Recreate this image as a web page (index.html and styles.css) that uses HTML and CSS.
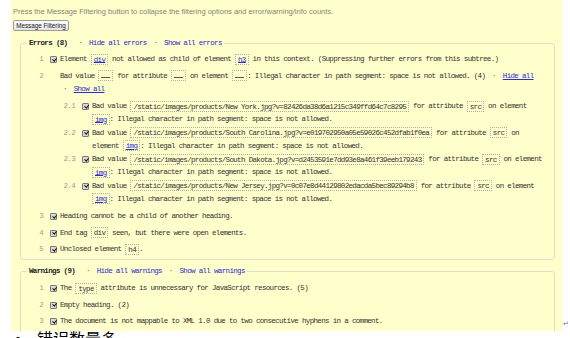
FILE: index.html
```html
<!DOCTYPE html>
<html lang="en">

<head>
    <meta charset="UTF-8">
    <title>Validation Messages</title>
    <link rel="stylesheet" href="styles.css">
</head>

<body>
    <div class="page">
        <div class="shot">
            <p class="intro">Press the Message Filtering button to collapse the filtering options and error/warning/info counts.</p>
            <button class="filter-btn">Message Filtering</button>

            <fieldset class="group">
                <legend><strong class="title">Errors (8)</strong> <span class="sep">·</span> <a href="#">Hide all errors</a> <span class="sep">·</span> <a href="#">Show all errors</a></legend>
                <ol class="msgs">
                    <li>
                        <span class="num">1</span><span class="check"></span>
                        <div class="text">Element <code class="el"><a href="#">div</a></code> not allowed as child of element <code class="el"><a href="#">h3</a></code> in this context. (Suppressing further errors from this subtree.)</div>
                    </li>
                    <li>
                        <span class="num">2</span><span class="check empty"></span>
                        <div class="text">
                            Bad value <code class="blank"><i></i></code> for attribute <code class="blank"><i></i></code> on element <code class="blank"><i></i></code>: Illegal character in path segment: space is not allowed. (4) <span class="sep">·</span> <a class="ul" href="#">Hide all</a><br>
                            <span class="sep">·</span> <a class="ul" href="#">Show all</a>
                            <ol class="sub">
                                <li>
                                    <span class="num">2.1</span><span class="check"></span>
                                    <div class="text">Bad value <code>/static/images/products/New York.jpg?v=82426da38d6a1215c349ffd64c7c8295</code> for attribute <code>src</code> on element<br><code class="el"><a href="#">img</a></code>: Illegal character in path segment: space is not allowed.</div>
                                </li>
                                <li>
                                    <span class="num">2.2</span><span class="check"></span>
                                    <div class="text">Bad value <code>/static/images/products/South Carolina.jpg?v=e019702950a05e59026c452dfab1f0ea</code> for attribute <code>src</code> on<br>element <code class="el"><a href="#">img</a></code>: Illegal character in path segment: space is not allowed.</div>
                                </li>
                                <li>
                                    <span class="num">2.3</span><span class="check"></span>
                                    <div class="text">Bad value <code>/static/images/products/South Dakota.jpg?v=d2453591e7dd93e8a461f39eeb179243</code> for attribute <code>src</code> on element<br><code class="el"><a href="#">img</a></code>: Illegal character in path segment: space is not allowed.</div>
                                </li>
                                <li>
                                    <span class="num">2.4</span><span class="check"></span>
                                    <div class="text">Bad value <code>/static/images/products/New Jersey.jpg?v=0c07e8d44129802edacda5bec89294b8</code> for attribute <code>src</code> on element<br><code class="el"><a href="#">img</a></code>: Illegal character in path segment: space is not allowed.</div>
                                </li>
                            </ol>
                        </div>
                    </li>
                    <li>
                        <span class="num">3</span><span class="check"></span>
                        <div class="text">Heading cannot be a child of another heading.</div>
                    </li>
                    <li>
                        <span class="num">4</span><span class="check"></span>
                        <div class="text">End tag <code>div</code> seen, but there were open elements.</div>
                    </li>
                    <li>
                        <span class="num">5</span><span class="check"></span>
                        <div class="text">Unclosed element <code>h4</code>.</div>
                    </li>
                </ol>
            </fieldset>

            <fieldset class="group warnings">
                <legend><strong class="title">Warnings (9)</strong> <span class="sep">·</span> <a href="#">Hide all warnings</a> <span class="sep">·</span> <a href="#">Show all warnings</a></legend>
                <ol class="msgs">
                    <li>
                        <span class="num">1</span><span class="check"></span>
                        <div class="text">The <code>type</code> attribute is unnecessary for JavaScript resources. (5)</div>
                    </li>
                    <li>
                        <span class="num">2</span><span class="check"></span>
                        <div class="text">Empty heading. (2)</div>
                    </li>
                    <li>
                        <span class="num">3</span><span class="check"></span>
                        <div class="text">The document is not mappable to XML 1.0 due to two consecutive hyphens in a comment.</div>
                    </li>
                </ol>
            </fieldset>
        </div>
        <span class="para-mark">↵</span>
    </div>

    <p class="bullet"><span class="dot">•</span>错误数量多</p>
</body>

</html>
```

FILE: styles.css
```css
* {
    box-sizing: border-box;
    margin: 0;
    padding: 0;
}

body {
    background: #fff;
    font-family: 'Liberation Mono', monospace;
    color: #333;
}

.page {
    display: flex;
    align-items: flex-end;
}

.shot {
    margin-left: 11px;
    width: 551px;
    height: 331px;
    overflow: hidden;
    background: #ffffcc;
    padding: 4.5px 7px 0 2px;
}

.intro {
    font-family: 'Liberation Sans', Arial, sans-serif;
    font-size: 7.5px;
    line-height: 13px;
    color: #85857a;
}

.filter-btn {
    display: block;
    margin-top: 2.5px;
    width: 56px;
    height: 11px;
    font-family: 'Liberation Sans', Arial, sans-serif;
    font-size: 6.3px;
    color: #222;
    border: 1px solid #9c9c9c;
    border-radius: 2px;
    background: linear-gradient(#fdfdfd, #e4e4e4);
}

.group {
    margin: 5.5px 0 0 7px;
    border: 1px solid #deddc8;
    border-radius: 3px;
    padding: 3.5px 0 2.5px 0;
    font-size: 7.5px;
    letter-spacing: -0.66px;
    line-height: 13px;
}

.group.warnings {
    padding: 4px 0 12px 0;
}

legend {
    margin-left: 6px;
    padding: 0 2px;
}

.title {
    color: #222;
    margin-right: 4px;
}

.sep {
    margin: 0 3px;
    color: #555;
}

a {
    color: #2b2bd0;
    text-decoration: none;
}

a.ul,
.el a {
    text-decoration: underline;
}

.msgs,
.sub {
    list-style: none;
}

.msgs li {
    display: flex;
}

.msgs li + li {
    margin-top: 3.5px;
}

.num {
    width: 22px;
    flex-shrink: 0;
    text-align: right;
    color: #9a9a9a;
}

.check {
    position: relative;
    flex-shrink: 0;
    width: 7px;
    height: 7px;
    margin: 3px 3px 0 7px;
    border: 1px solid #7a7a7a;
    border-radius: 1px;
    background: #d8d8d8;
}

.check::after {
    content: '';
    position: absolute;
    left: 1.5px;
    top: -0.5px;
    width: 1.6px;
    height: 3.4px;
    border-right: 1.3px solid #111;
    border-bottom: 1.3px solid #111;
    transform: rotate(40deg);
}

.check.empty {
    border: none;
    background: none;
}

.check.empty::after {
    display: none;
}

.text {
    white-space: nowrap;
}

code {
    font: inherit;
    border: 1px dotted #b0b0a0;
    padding: 0.5px 2px;
}

code.blank i {
    display: inline-block;
    width: 9px;
    height: 6px;
    border-bottom: 1px solid #555;
}

.sub {
    margin: 4.5px 0 1px 0;
}

.sub li + li {
    margin-top: 0.5px;
}

.sub .num {
    width: 15px;
}

.para-mark {
    font-family: 'DejaVu Sans', sans-serif;
    font-size: 7px;
    line-height: 8px;
    color: #777;
    margin: 0 0 3px 1px;
}

.bullet {
    font-family: 'Noto Sans', 'Noto Sans CJK SC', sans-serif;
    font-size: 16px;
    line-height: 16px;
    padding-left: 15px;
    color: #000;
}

.dot {
    display: inline-block;
    width: 22px;
}
```
